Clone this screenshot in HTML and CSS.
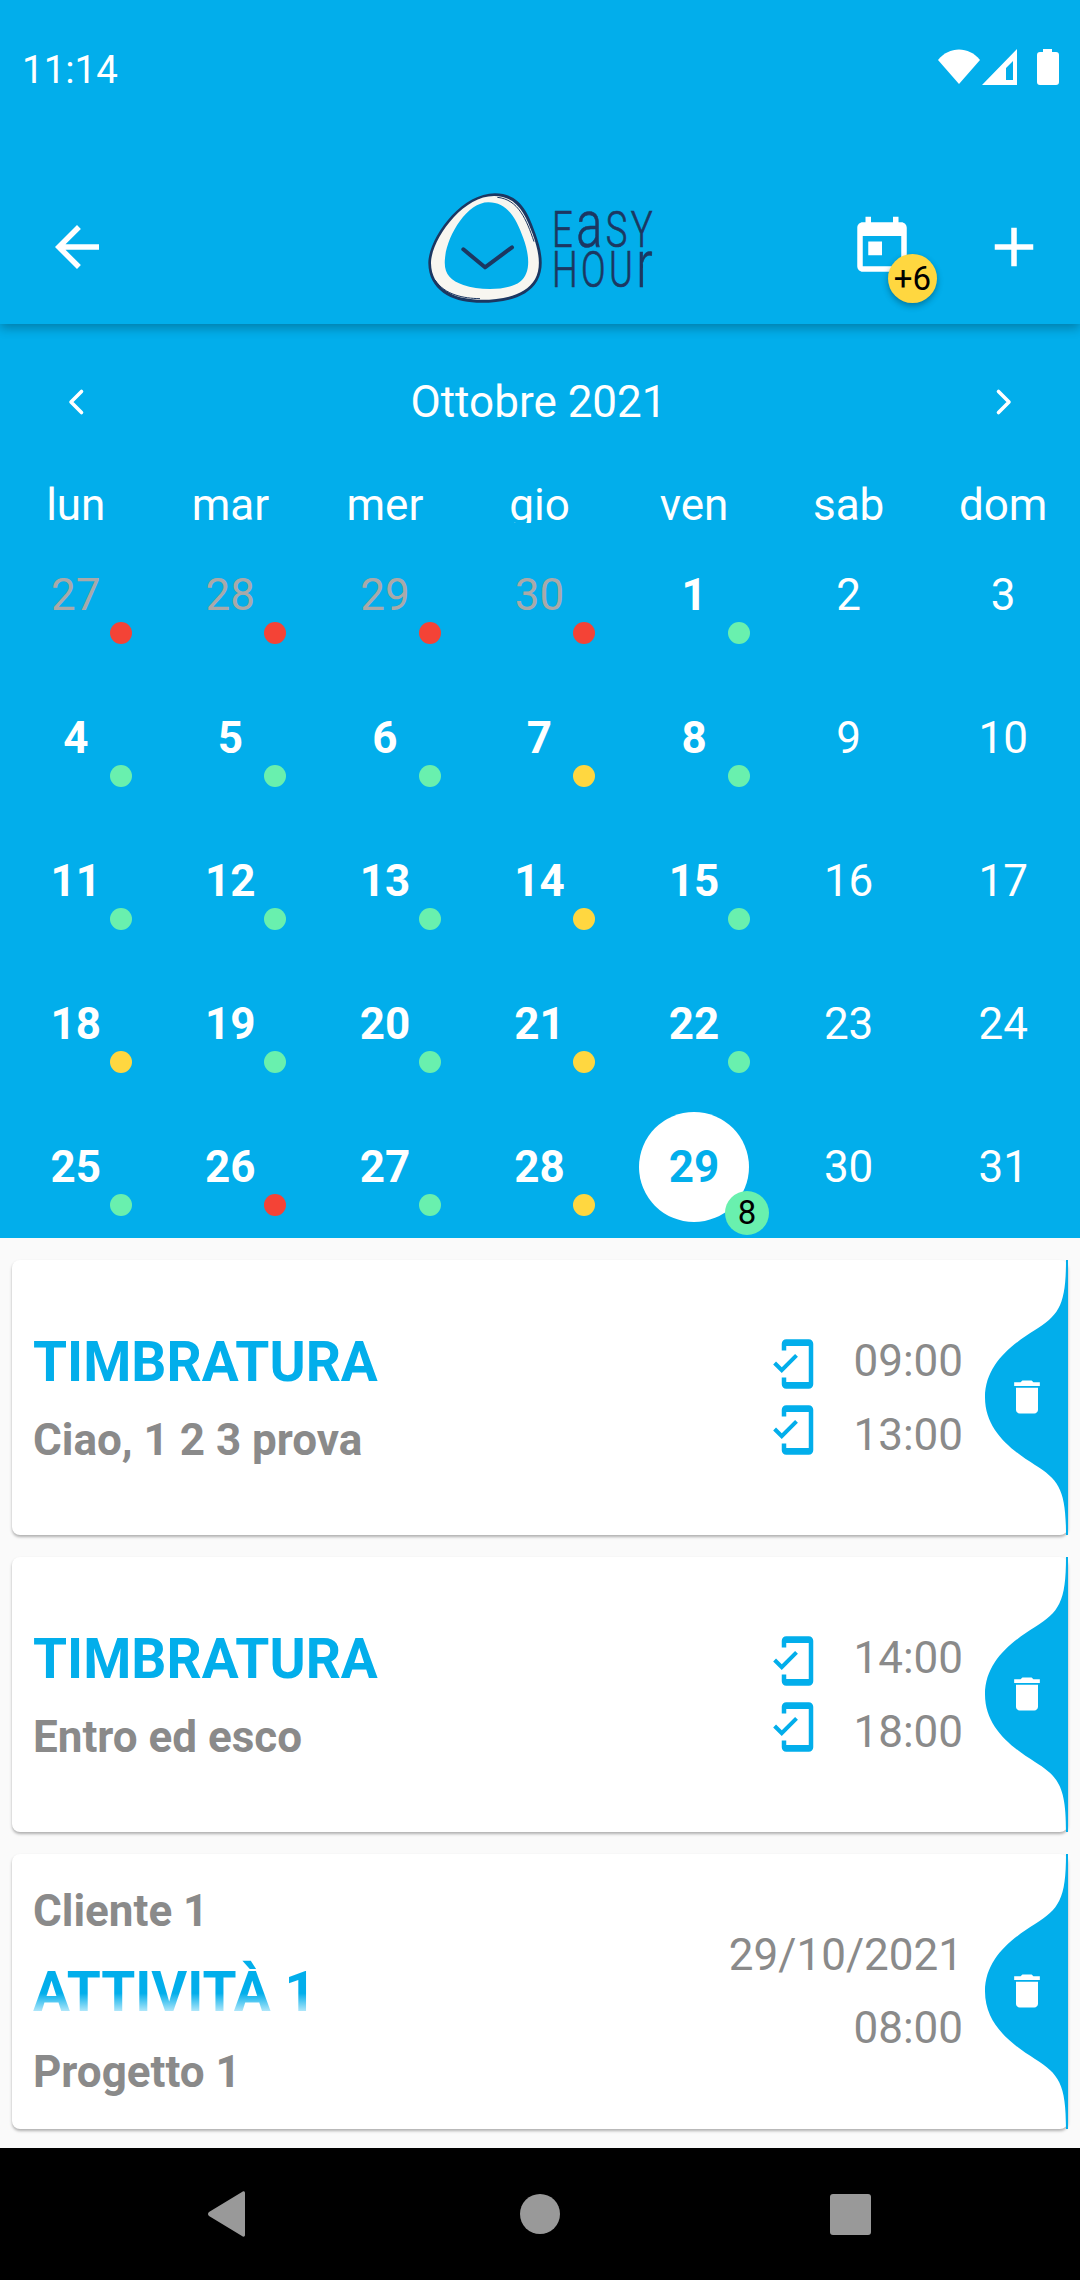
FILE: index.html
```html
<!DOCTYPE html>
<html>
<head>
    <title>Easy Hour</title>
    <link rel="stylesheet" href="styles.css">
</head>
<body>
    <div class="phone">
        <div class="top">
            <div class="status-bar">
                <span class="clock">11:14</span>
                <div class="status-icons">
                    <svg width="42" height="36" viewBox="0 0 42 36"><path fill="#fff" d="M0 11C11-3 31-3 42 11L21 35z"/></svg>
                    <svg width="35" height="36" viewBox="0 0 35 36"><path fill="#fff" fill-rule="evenodd" d="M35 0V36H0zM31 12L24 19V31H31z"/></svg>
                    <svg width="22" height="36" viewBox="0 0 22 36"><path fill="#fff" d="M6 0h9v3h4q3 0 3 3v27q0 3-3 3H3q-3 0-3-3V6q0-3 3-3h3z"/></svg>
                </div>
            </div>
            <header class="toolbar">
                <svg class="icon" viewBox="0 0 24 24"><path d="M20 11H7.83l5.59-5.59L12 4l-8 8 8 8 1.41-1.41L7.83 13H20v-2z"/></svg>
                <svg class="logo" viewBox="0 0 960 462">
                    <path fill="#1c3761" d="M345 70C420 70 445 130 466 190C486 245 494 292 472 332C440 388 360 400 290 398C215 396 146 360 145 280C144 210 240 70 345 70Z"/>
                    <path fill="#f8f6f0" d="M342 78C412 78 436 134 458 192C477 245 485 290 465 328C435 380 358 391 292 389C222 387 154 355 153 280C152 214 244 78 342 78Z"/>
                    <path fill="none" stroke="#1c3761" stroke-width="3" d="M352 82C415 88 440 150 462 215M165 330C195 375 250 385 300 386"/>
                    <path fill="#02aeeb" d="M325 97C385 97 410 150 430 205C450 260 452 310 420 335C385 362 300 362 250 345C210 330 190 310 195 265C200 200 260 97 325 97Z"/>
                    <path fill="none" stroke="#1c3761" stroke-width="12" stroke-linecap="round" stroke-linejoin="round" d="M250 238L315 292L396 232"/>
                    <text class="logo-text" x="516" y="230" textLength="312" lengthAdjust="spacingAndGlyphs">E<tspan class="logo-tall">a</tspan>SY</text>
                    <text class="logo-text" x="516" y="350" textLength="312" lengthAdjust="spacingAndGlyphs">HOU<tspan class="logo-tall">r</tspan></text>
                </svg>
                <div class="toolbar-actions">
                    <div class="today">
                        <svg class="icon" viewBox="0 0 24 24"><path d="M19 3h-1V1h-2v2H8V1H6v2H5c-1.11 0-1.99.9-1.99 2L3 19c0 1.1.89 2 2 2h14c1.1 0 2-.9 2-2V5c0-1.1-.9-2-2-2zm0 16H5V8h14v11zM7 10h5v5H7z"/></svg>
                        <span class="today-badge">+6</span>
                    </div>
                    <svg class="icon" viewBox="0 0 24 24"><path d="M19 13h-6v6h-2v-6H5v-2h6V5h2v6h6v2z"/></svg>
                </div>
            </header>
            <section class="calendar">
                <div class="month-row">
                    <svg class="chevron" viewBox="0 0 24 24"><path d="M15 5l-7 7 7 7"/></svg>
                    <span class="month-name">Ottobre 2021</span>
                    <svg class="chevron" viewBox="0 0 24 24"><path d="M9 5l7 7-7 7"/></svg>
                </div>
                <div class="week-row">
                    <span>lun</span><span>mar</span><span>mer</span><span>gio</span><span>ven</span><span>sab</span><span>dom</span>
                </div>
                <div class="days">
                    <div class="day out">27<i class="dot red"></i></div>
                    <div class="day out">28<i class="dot red"></i></div>
                    <div class="day out">29<i class="dot red"></i></div>
                    <div class="day out">30<i class="dot red"></i></div>
                    <div class="day work">1<i class="dot green"></i></div>
                    <div class="day">2</div>
                    <div class="day">3</div>

                    <div class="day work">4<i class="dot green"></i></div>
                    <div class="day work">5<i class="dot green"></i></div>
                    <div class="day work">6<i class="dot green"></i></div>
                    <div class="day work">7<i class="dot yellow"></i></div>
                    <div class="day work">8<i class="dot green"></i></div>
                    <div class="day">9</div>
                    <div class="day">10</div>

                    <div class="day work">11<i class="dot green"></i></div>
                    <div class="day work">12<i class="dot green"></i></div>
                    <div class="day work">13<i class="dot green"></i></div>
                    <div class="day work">14<i class="dot yellow"></i></div>
                    <div class="day work">15<i class="dot green"></i></div>
                    <div class="day">16</div>
                    <div class="day">17</div>

                    <div class="day work">18<i class="dot yellow"></i></div>
                    <div class="day work">19<i class="dot green"></i></div>
                    <div class="day work">20<i class="dot green"></i></div>
                    <div class="day work">21<i class="dot yellow"></i></div>
                    <div class="day work">22<i class="dot green"></i></div>
                    <div class="day">23</div>
                    <div class="day">24</div>

                    <div class="day work">25<i class="dot green"></i></div>
                    <div class="day work">26<i class="dot red"></i></div>
                    <div class="day work">27<i class="dot green"></i></div>
                    <div class="day work">28<i class="dot yellow"></i></div>
                    <div class="day work selected"><span class="selected-num">29</span><span class="count">8</span></div>
                    <div class="day">30</div>
                    <div class="day">31</div>
                </div>
            </section>
        </div>

        <main class="list">
            <article class="card">
                <div class="card-main">
                    <div class="card-title">TIMBRATURA</div>
                    <div class="card-sub">Ciao, 1 2 3 prova</div>
                </div>
                <div class="punches">
                    <div class="punch-icons">
                        <svg class="punch-icon" viewBox="0 0 24 24"><path d="M19 1H9c-1.1 0-2 .9-2 2v3h2V4h10v16H9v-2H7v3c0 1.1.9 2 2 2h10c1.1 0 2-.9 2-2V3c0-1.1-.9-2-2-2zM7.01 13.47l-2.55-2.55-1.27 1.27L7 16l7.19-7.19-1.27-1.27z"/></svg>
                        <svg class="punch-icon" viewBox="0 0 24 24"><path d="M19 1H9c-1.1 0-2 .9-2 2v3h2V4h10v16H9v-2H7v3c0 1.1.9 2 2 2h10c1.1 0 2-.9 2-2V3c0-1.1-.9-2-2-2zM7.01 13.47l-2.55-2.55-1.27 1.27L7 16l7.19-7.19-1.27-1.27z"/></svg>
                    </div>
                    <div class="punch-times"><span>09:00</span><span>13:00</span></div>
                </div>
                <div class="wave">
                    <svg class="wave-bg" viewBox="0 0 83 275"><path d="M81 0C81 45 74 55 50 70C26 85 0 105 0 137.5C0 170 26 190 50 205C74 220 81 230 81 275H83V0Z"/></svg>
                    <svg class="trash" viewBox="0 0 24 24"><path d="M6 19c0 1.1.9 2 2 2h8c1.1 0 2-.9 2-2V7H6v12zM19 4h-3.5l-1-1h-5l-1 1H5v2h14V4z"/></svg>
                </div>
            </article>

            <article class="card">
                <div class="card-main">
                    <div class="card-title">TIMBRATURA</div>
                    <div class="card-sub">Entro ed esco</div>
                </div>
                <div class="punches">
                    <div class="punch-icons">
                        <svg class="punch-icon" viewBox="0 0 24 24"><path d="M19 1H9c-1.1 0-2 .9-2 2v3h2V4h10v16H9v-2H7v3c0 1.1.9 2 2 2h10c1.1 0 2-.9 2-2V3c0-1.1-.9-2-2-2zM7.01 13.47l-2.55-2.55-1.27 1.27L7 16l7.19-7.19-1.27-1.27z"/></svg>
                        <svg class="punch-icon" viewBox="0 0 24 24"><path d="M19 1H9c-1.1 0-2 .9-2 2v3h2V4h10v16H9v-2H7v3c0 1.1.9 2 2 2h10c1.1 0 2-.9 2-2V3c0-1.1-.9-2-2-2zM7.01 13.47l-2.55-2.55-1.27 1.27L7 16l7.19-7.19-1.27-1.27z"/></svg>
                    </div>
                    <div class="punch-times"><span>14:00</span><span>18:00</span></div>
                </div>
                <div class="wave">
                    <svg class="wave-bg" viewBox="0 0 83 275"><path d="M81 0C81 45 74 55 50 70C26 85 0 105 0 137.5C0 170 26 190 50 205C74 220 81 230 81 275H83V0Z"/></svg>
                    <svg class="trash" viewBox="0 0 24 24"><path d="M6 19c0 1.1.9 2 2 2h8c1.1 0 2-.9 2-2V7H6v12zM19 4h-3.5l-1-1h-5l-1 1H5v2h14V4z"/></svg>
                </div>
            </article>

            <article class="card">
                <div class="card-main activity">
                    <div class="card-sub">Cliente 1</div>
                    <div class="card-title fade">ATTIVITÀ 1</div>
                    <div class="card-sub">Progetto 1</div>
                </div>
                <div class="when">
                    <span>29/10/2021</span>
                    <span>08:00</span>
                </div>
                <div class="wave">
                    <svg class="wave-bg" viewBox="0 0 83 275"><path d="M81 0C81 45 74 55 50 70C26 85 0 105 0 137.5C0 170 26 190 50 205C74 220 81 230 81 275H83V0Z"/></svg>
                    <svg class="trash" viewBox="0 0 24 24"><path d="M6 19c0 1.1.9 2 2 2h8c1.1 0 2-.9 2-2V7H6v12zM19 4h-3.5l-1-1h-5l-1 1H5v2h14V4z"/></svg>
                </div>
            </article>
        </main>

        <nav class="nav-bar">
            <svg width="38" height="46" viewBox="0 0 38 46"><path d="M38 2C38 0 36 0 35 1L2 21Q0 23 2 25L35 45C36 46 38 46 38 44Z"/></svg>
            <svg class="nav-home" width="40" height="40" viewBox="0 0 40 40"><circle cx="20" cy="20" r="20"/></svg>
            <svg width="41" height="41" viewBox="0 0 41 41"><rect width="41" height="41" rx="3"/></svg>
        </nav>
    </div>
</body>
</html>
```

FILE: styles.css
```css
body {
    margin: 0;
    font-family: Roboto, "Noto Sans", sans-serif;
    background-color: #fafafa;
}
.phone {
    width: 1080px;
    height: 2280px;
    display: flex;
    flex-direction: column;
    overflow: hidden;
}
.top {
    background-color: #02aeeb;
    color: #fff;
}
.status-bar {
    height: 170px;
    display: flex;
    justify-content: space-between;
    align-items: flex-start;
    padding: 47px 21px 0 22px;
    box-sizing: border-box;
}
.clock {
    font-size: 38.5px;
    line-height: 46px;
}
.status-icons {
    display: flex;
    gap: 2px;
    margin-top: 2px;
}
.status-icons svg + svg + svg {
    margin-left: 18px;
}
.toolbar {
    height: 154px;
    display: flex;
    justify-content: space-between;
    align-items: center;
    padding: 0 33px 0 44px;
    position: relative;
    box-shadow: 0 4px 10px rgba(0, 0, 0, 0.28);
    clip-path: inset(0 0 -30px 0);
}
.icon {
    width: 66px;
    height: 66px;
    fill: #fff;
    display: block;
}
.logo {
    width: 320px;
    height: 154px;
    position: absolute;
    left: 380px;
    top: 0;
}
.logo-text {
    font-family: Roboto, sans-serif;
    font-weight: 300;
    font-size: 148px;
    letter-spacing: 14px;
    fill: #1c3761;
    stroke: #1c3761;
    stroke-width: 2px;
}
.logo-tall {
    font-size: 198px;
}
.toolbar-actions {
    display: flex;
    gap: 66px;
}
.today {
    position: relative;
}
.today-badge {
    position: absolute;
    left: 39px;
    top: 40px;
    width: 49px;
    height: 49px;
    border-radius: 50%;
    background-color: #ffd740;
    color: #000;
    font-size: 33px;
    line-height: 49px;
    text-align: center;
    box-shadow: 0 3px 6px rgba(0, 0, 0, 0.3);
}
.month-row {
    height: 147px;
    display: flex;
    justify-content: space-between;
    align-items: center;
    padding: 9px 44px 0 44px;
    box-sizing: border-box;
    font-size: 44px;
}
.month-name {
    margin-right: 3px;
}
.chevron {
    width: 66px;
    height: 36px;
    fill: none;
    stroke: #fff;
    stroke-width: 2.4;
    stroke-linecap: round;
    stroke-linejoin: round;
}
.week-row {
    display: grid;
    grid-template-columns: repeat(7, 1fr);
    margin-left: -1.5px;
    width: 1082px;
    height: 52px;
    overflow: hidden;
    font-size: 44px;
    line-height: 68px;
    text-align: center;
}
.days {
    display: grid;
    grid-template-columns: repeat(7, 1fr);
    grid-auto-rows: 143px;
    margin-left: -1.5px;
    width: 1082px;
}
.day {
    position: relative;
    display: flex;
    justify-content: center;
    align-items: center;
    font-size: 44px;
    line-height: 1;
}
.day.out {
    color: #a9a9a9;
}
.day.work {
    font-weight: 700;
}
.dot {
    position: absolute;
    left: calc(50% + 34px);
    top: calc(50% + 27px);
    width: 22px;
    height: 22px;
    border-radius: 50%;
}
.red {
    background-color: #f44336;
}
.green {
    background-color: #69f0ae;
}
.yellow {
    background-color: #ffd740;
}
.selected-num {
    width: 110px;
    height: 110px;
    border-radius: 50%;
    background-color: #fff;
    color: #02aeeb;
    text-align: center;
    line-height: 110px;
}
.count {
    position: absolute;
    left: calc(50% + 31px);
    top: calc(50% + 24px);
    width: 44px;
    height: 44px;
    border-radius: 50%;
    background-color: #69f0ae;
    color: #000;
    font-size: 33px;
    font-weight: 400;
    line-height: 44px;
    text-align: center;
}
.list {
    flex: 1;
    display: flex;
    flex-direction: column;
    gap: 22px;
    padding: 22px 12px 0 12px;
}
.card {
    position: relative;
    height: 275px;
    display: flex;
    justify-content: space-between;
    align-items: center;
    padding: 0 105px 0 21px;
    background-color: #fff;
    border-radius: 8px;
    box-shadow: 0 2px 3px rgba(0, 0, 0, 0.3);
}
.card-main {
    display: flex;
    flex-direction: column;
}
.card-title {
    color: #02aeeb;
    font-size: 55px;
    font-weight: 700;
    line-height: 64px;
}
.card-sub {
    color: #8a8a8a;
    font-size: 44px;
    font-weight: 700;
    line-height: 52px;
    margin-top: 20px;
}
.activity .card-sub {
    margin-top: 0;
}
.activity .card-title {
    margin: 23px 0 22px 0;
}
.fade {
    background: linear-gradient(#02aeeb 52%, #b0e7fa 80%);
    -webkit-background-clip: text;
    background-clip: text;
    color: transparent;
}
.punches {
    display: flex;
    gap: 33px;
}
.punch-icons {
    display: flex;
    flex-direction: column;
    gap: 12px;
    padding-top: 13px;
}
.punch-icon {
    width: 54px;
    height: 54px;
    fill: #02aeeb;
    display: block;
}
.punch-times {
    display: flex;
    flex-direction: column;
    color: #8a8a8a;
    font-size: 44px;
    line-height: 74px;
}
.when {
    display: flex;
    flex-direction: column;
    align-items: flex-end;
    color: #8a8a8a;
    font-size: 44px;
    line-height: 73px;
}
.wave {
    position: absolute;
    right: 0;
    top: 0;
    width: 83px;
    height: 275px;
}
.wave-bg {
    width: 83px;
    height: 275px;
    fill: #02aeeb;
    display: block;
}
.trash {
    position: absolute;
    left: 20px;
    top: 115px;
    width: 44px;
    height: 44px;
    fill: #fff;
}
.nav-bar {
    height: 132px;
    background-color: #000;
    display: flex;
    align-items: center;
    gap: 275px;
    padding-left: 207px;
    fill: #999;
}
.nav-home {
    margin-right: -5px;
}
```
